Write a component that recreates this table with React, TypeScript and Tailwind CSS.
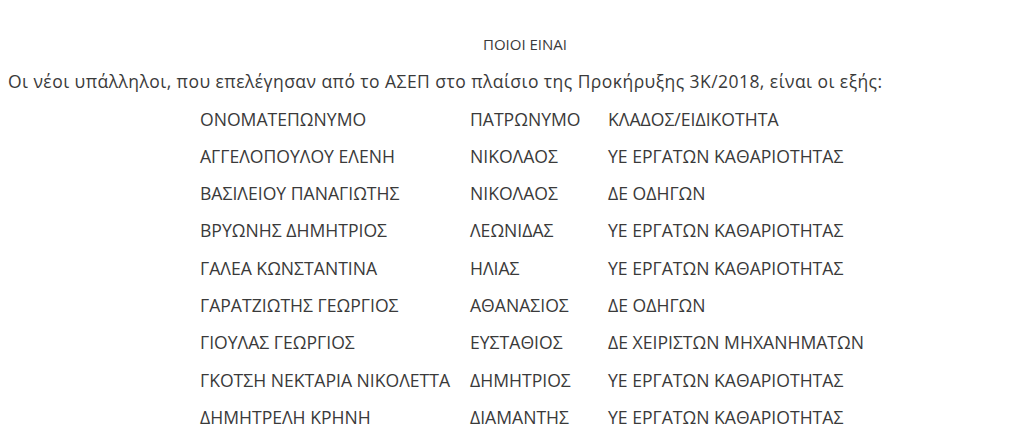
const rows: [string, string, string][] = [
  ['ΑΓΓΕΛΟΠΟΥΛΟΥ ΕΛΕΝΗ', 'ΝΙΚΟΛΑΟΣ', 'ΥΕ ΕΡΓΑΤΩΝ ΚΑΘΑΡΙΟΤΗΤΑΣ'],
  ['ΒΑΣΙΛΕΙΟΥ ΠΑΝΑΓΙΩΤΗΣ', 'ΝΙΚΟΛΑΟΣ', 'ΔΕ ΟΔΗΓΩΝ'],
  ['ΒΡΥΩΝΗΣ ΔΗΜΗΤΡΙΟΣ', 'ΛΕΩΝΙΔΑΣ', 'ΥΕ ΕΡΓΑΤΩΝ ΚΑΘΑΡΙΟΤΗΤΑΣ'],
  ['ΓΑΛΕΑ ΚΩΝΣΤΑΝΤΙΝΑ', 'ΗΛΙΑΣ', 'ΥΕ ΕΡΓΑΤΩΝ ΚΑΘΑΡΙΟΤΗΤΑΣ'],
  ['ΓΑΡΑΤΖΙΩΤΗΣ ΓΕΩΡΓΙΟΣ', 'ΑΘΑΝΑΣΙΟΣ', 'ΔΕ ΟΔΗΓΩΝ'],
  ['ΓΙΟΥΛΑΣ ΓΕΩΡΓΙΟΣ', 'ΕΥΣΤΑΘΙΟΣ', 'ΔΕ ΧΕΙΡΙΣΤΩΝ ΜΗΧΑΝΗΜΑΤΩΝ'],
  ['ΓΚΟΤΣΗ ΝΕΚΤΑΡΙΑ ΝΙΚΟΛΕΤΤΑ', 'ΔΗΜΗΤΡΙΟΣ', 'ΥΕ ΕΡΓΑΤΩΝ ΚΑΘΑΡΙΟΤΗΤΑΣ'],
  ['ΔΗΜΗΤΡΕΛΗ ΚΡΗΝΗ', 'ΔΙΑΜΑΝΤΗΣ', 'ΥΕ ΕΡΓΑΤΩΝ ΚΑΘΑΡΙΟΤΗΤΑΣ'],
]

export default function App() {
  return (
    <div className="min-h-[431px] bg-white pt-[26px] pl-2 font-['Open_Sans',sans-serif] text-[17px] leading-[37.3px] text-[#3a3a3a]">
      <div className="pl-[475px] text-[15px]">ΠΟΙΟΙ ΕΙΝΑΙ</div>
      <p className="text-[17.5px] tracking-[0.45px]">Οι νέοι υπάλληλοι, που επελέγησαν από το ΑΣΕΠ στο πλαίσιο της Προκήρυξης 3Κ/2018, είναι οι εξής:</p>
      <div className="ml-[192px] grid grid-cols-[270px_138px_auto] text-[17.6px]">
        <div>ΟΝΟΜΑΤΕΠΩΝΥΜΟ</div>
        <div>ΠΑΤΡΩΝΥΜΟ</div>
        <div>ΚΛΑΔΟΣ/ΕΙΔΙΚΟΤΗΤΑ</div>
        {rows.map(([name, father, branch]) => (
          <div key={name} className="contents">
            <div>{name}</div>
            <div>{father}</div>
            <div>{branch}</div>
          </div>
        ))}
      </div>
    </div>
  )
}
